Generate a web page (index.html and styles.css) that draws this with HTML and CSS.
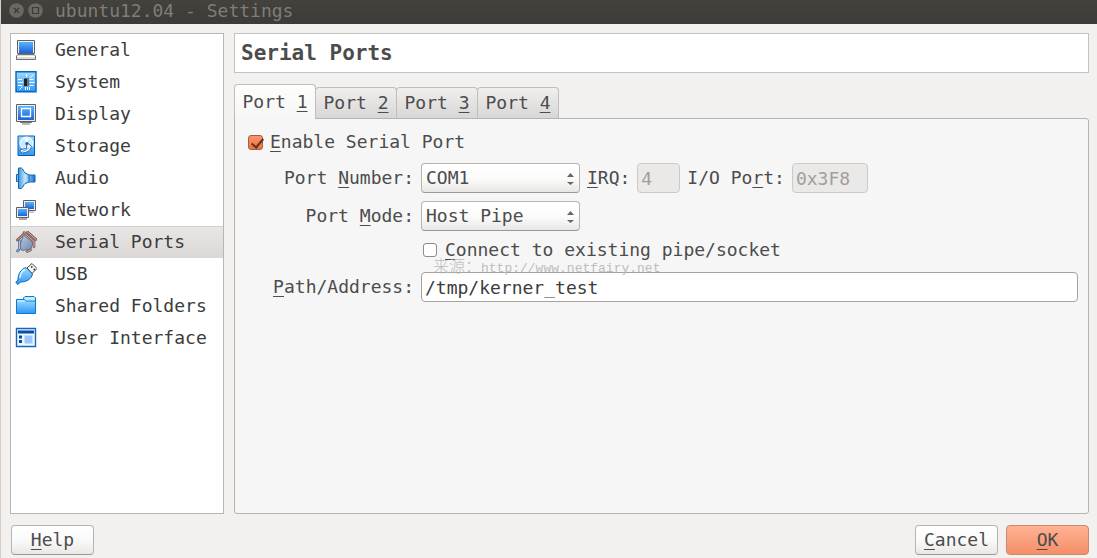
FILE: index.html
```html
<!DOCTYPE html>
<html lang="en">
<head>
<meta charset="utf-8">
<title>ubuntu12.04 - Settings</title>
<link rel="stylesheet" href="styles.css">
</head>
<body>
<svg class="defs" width="0" height="0" aria-hidden="true">
  <defs>
    <linearGradient id="screen" x2="0" y2="1"><stop stop-color="#55b4fb"/><stop offset="1" stop-color="#1c62dc"/></linearGradient>
    <linearGradient id="sky" x2="0" y2="1"><stop stop-color="#9fdcff"/><stop offset="1" stop-color="#2f97f3"/></linearGradient>
    <linearGradient id="cone" x2="1" y2="0"><stop stop-color="#3c94e0"/><stop offset=".4" stop-color="#c4e8ff"/><stop offset="1" stop-color="#1670d0"/></linearGradient>
    <linearGradient id="plug" x2="1" y2="1"><stop stop-color="#c5ccd6"/><stop offset="1" stop-color="#6b87b0"/></linearGradient>
  </defs>
</svg>
<div class="window">
  <header class="titlebar">
    <button class="winbtn" aria-label="Close"><svg width="15" height="15" viewBox="0 0 15 15"><circle cx="7.5" cy="7.500" r="7.300" fill="#6b6961"/><path d="M5 5l5 5M10 5l-5 5" stroke="#3c3b37" stroke-width="1.300"/></svg></button>
    <button class="winbtn" aria-label="Maximize"><svg width="15" height="15" viewBox="0 0 15 15"><circle cx="7.500" cy="7.500" r="7.300" fill="#6b6961"/><path d="M4.500 4.500h6v6h-6z" fill="none" stroke="#3c3b37" stroke-width="1.200"/></svg></button>
    <h1 class="wintitle">ubuntu12.04 - Settings</h1>
  </header>
  <main class="content">
    <nav class="sidebar">
      <a class="item" href="#"><svg class="icon" viewBox="0 0 22 22"><path d="M2.500 1.500h17v13h-17z" fill="#eee" stroke="#606060"/><path d="M4 3h14v11H4z" fill="url(#screen)"/><path d="M3 15.500h16l1.500 1.500v3.500h-19V17z" fill="#ddd" stroke="#707070"/><path d="M2 17.500h18" stroke="#fff"/></svg>General</a>
      <a class="item" href="#"><svg class="icon" viewBox="0 0 22 22"><path d="M1 .8h20v20H1z" fill="url(#sky)" stroke="#0865bb" stroke-width="1.400"/><path d="M3 8.500h4M3 11.500h5M3 14.500h4M14.500 8.500h4M14.500 11.500h5M14.500 14.500h4M11.500 3v3M18 4l-3 3M4.500 18.500l3-3M10.500 16v3M12.500 16v3M14.500 16v3" stroke="#fff"/><path d="M9 7.500h4.500v7.500H9z" fill="#222"/><path d="M12 8h1.500v7H12z" fill="#777"/></svg>System</a>
      <a class="item" href="#"><svg class="icon" viewBox="0 0 22 22"><path d="M1.500 1.500h19v17h-19z" fill="#eee" stroke="#606060"/><path d="M3 3h16v14H3z" fill="url(#screen)"/><path d="M6.500 5.500h9v8h-9z" fill="none" stroke="#fff" stroke-width="1.300"/><path d="M5 19.500h12M7 21h8" stroke="#777"/></svg>Display</a>
      <a class="item" href="#"><svg class="icon" viewBox="0 0 22 22"><path d="M3 1h16.500v19.500H3z" fill="url(#sky)" stroke="#0a5baf"/><circle cx="11.500" cy="8.500" r="6.500" fill="#c8ebff" stroke="#fff"/><path d="M11.500 8.500L9 2.500l5 0zM11.500 8.500l3 6-5 0z" fill="#fff"/><path d="M12 7.500l4.500 4c-1 4-4 6-9 6.500L5 16.500l.5-2 6-1z" fill="#f2fbff" stroke="#2465a5"/><path d="M7 16.500l5-2 2-2" fill="none" stroke="#69ace2"/><circle cx="11.800" cy="8.500" r="1.500" fill="#1667b1"/></svg>Storage</a>
      <a class="item" href="#"><svg class="icon" viewBox="0 0 22 22"><path d="M1.500 7.500h4v7h-4z" fill="#7cbdf0" stroke="#1264b5"/><path d="M3.500 1h3c1.500 1 2 3 3.500 5l4 2h6v7h-6l-4 1.500c-1.500 1.500-2 4-3.500 5h-3z" fill="url(#cone)" stroke="#1264b5"/><path d="M14 8v6.500" stroke="#1264b5"/></svg>Audio</a>
      <a class="item" href="#"><svg class="icon" viewBox="0 0 22 22"><path d="M8.500 1.500h12v10h-12z" fill="#eee" stroke="#606060"/><path d="M10 3h9v7h-9z" fill="url(#screen)"/><path d="M14 13h5" stroke="#999"/><path d="M1.500 8.500h12v10h-12z" fill="#eee" stroke="#606060"/><path d="M3 10h9v7H3z" fill="url(#screen)"/><path d="M4 20h8" stroke="#888" stroke-width="1.500"/></svg>Network</a>
      <a class="item selected" href="#" aria-current="page"><svg class="icon" viewBox="0 0 22 22"><path d="M9 3L2.500 9" stroke="#795d5a" stroke-width="3" stroke-linecap="round"/><path d="M9 3L2.500 9" stroke="#d6a292" stroke-linecap="round"/><path d="M8.500 4l9.500 8-2 6-9 1.500-2.500-4z" fill="url(#plug)" stroke="#5c77a3"/><path d="M9 1.500l10 9M12.500 1l8.500 7.500M19 11v5M12 20.500l3.500-1.500" fill="none" stroke="#795d5a" stroke-width="2.600" stroke-linecap="round"/><path d="M9 1.500l10 9M12.500 1l8.500 7.500M19 11v5M12 20.500l3.500-1.500" fill="none" stroke="#e0b0a0" stroke-linecap="round"/><path d="M4.500 10v8l-2 2" fill="none" stroke="#4f6c9c" stroke-width="2.600" stroke-linecap="round"/><path d="M4.500 10v8l-2 2" fill="none" stroke="#b5c7dd" stroke-linecap="round"/></svg>Serial Ports</a>
      <a class="item" href="#"><svg class="icon" viewBox="0 0 22 22"><path d="M12 5l5-4.500 5 5-5 5z" fill="#f5f5f5" stroke="#444"/><path d="M16 4h1.500M18.500 6.500H20" stroke="#222" stroke-width="1.500"/><path d="M11 4.500l6.500 6.500c-1 5-6 8-12 8L3 21.500.8 19.500 3 17c0-6 3-11 8-12.500z" fill="url(#sky)" stroke="#0865b5"/><path d="M5 15c0-4 2-7 5-8.500" fill="none" stroke="#d9f3ff" stroke-width="1.500"/></svg>USB</a>
      <a class="item" href="#"><svg class="icon" viewBox="0 0 22 22"><path d="M8.500 5V3l1.500-1.500h9L20.500 3v3" fill="#c4ecff" stroke="#087bcc"/><path d="M1.500 4.500h8l2 1.500h9v12.500h-19z" fill="url(#sky)" stroke="#087bcc"/><path d="M2.500 6h7" stroke="#d8f4ff"/></svg>Shared Folders</a>
      <a class="item" href="#"><svg class="icon" viewBox="0 0 22 22"><path d="M1.500 1.500h19v18h-19z" fill="#eef7ff" stroke="#1168ba" stroke-width="1.400"/><path d="M3 3.500h16v3H3z" fill="#0a4ba0"/><path d="M4 8.500h3v3H4zM4 13h3v3H4z" fill="#0a4ba0"/><path d="M9.500 8.500h8v8h-8z" fill="#9ac5ff"/></svg>User Interface</a>
    </nav>
    <section class="page">
      <h2 class="heading">Serial Ports</h2>
      <div class="tabs" role="tablist">
        <button class="tab active" role="tab" aria-selected="true">Port <u>1</u></button>
        <button class="tab" role="tab">Port <u>2</u></button>
        <button class="tab" role="tab">Port <u>3</u></button>
        <button class="tab" role="tab">Port <u>4</u></button>
      </div>
      <form class="panel" id="settings">
        <label class="check enable"><input type="checkbox" checked><span><u>E</u>nable Serial Port</span></label>
        <div class="fields">
          <label class="caption" for="number">Port <u>N</u>umber:</label>
          <div class="row">
            <span class="combo"><select id="number"><option>COM1</option></select><svg class="arrows" viewBox="0 0 7 12" aria-hidden="true"><path d="M3.500 0L7 4H0zM3.500 12L7 9H0z" fill="#666"/></svg></span>
            <label for="irq"><u>I</u>RQ:</label>
            <input class="box irq" id="irq" type="text" value="4" disabled>
            <label for="io">I/O Po<u>r</u>t:</label>
            <input class="box io" id="io" type="text" value="0x3F8" disabled>
          </div>
          <label class="caption" for="mode">Port <u>M</u>ode:</label>
          <div class="row">
            <span class="combo"><select id="mode"><option>Host Pipe</option></select><svg class="arrows" viewBox="0 0 7 12" aria-hidden="true"><path d="M3.500 0L7 4H0zM3.500 12L7 9H0z" fill="#666"/></svg></span>
          </div>
          <div class="row connect">
            <label class="check"><input type="checkbox"><span><u>C</u>onnect to existing pipe/socket</span></label>
            <span class="source"><span class="han">来源：</span>http://www.netfairy.net</span>
          </div>
          <label class="caption" for="path"><u>P</u>ath/Address:</label>
          <input class="box path" id="path" type="text" value="/tmp/kerner_test">
        </div>
      </form>
    </section>
  </main>
  <footer class="footer">
    <button class="btn help"><u>H</u>elp</button>
    <button class="btn"><u>C</u>ancel</button>
    <button class="btn primary"><u>O</u>K</button>
  </footer>
</div>
</body>
</html>
```
FILE: styles.css
```css
* { box-sizing: border-box; }
body {
  margin: 0;
  background: #d8ccc4;
  color: #4c4c4c;
  font: 18px/22px "DejaVu Sans Mono", monospace;
}
button, input, select { font: inherit; color: inherit; margin: 0; }
u { text-decoration-thickness: 1px; text-underline-offset: 3px; text-decoration-skip-ink: none; }
.defs { position: absolute; }
.window {
  display: flex;
  flex-direction: column;
  min-height: 100vh;
  margin-left: 1px;
  background: #f2f1f0;
}
.titlebar {
  display: flex;
  align-items: flex-start;
  gap: 4px;
  height: 24px;
  padding-left: 8px;
  background: linear-gradient(#43423d, #3c3b37);
}
.winbtn { display: flex; width: 15px; padding: 3px 0; border: 0; background: none; }
.wintitle { margin: 0 0 0 8px; font-size: 18px; font-weight: normal; color: #807d78; }
.content {
  flex: 1;
  display: grid;
  grid-template-columns: 214px 1fr;
  gap: 10px;
  padding: 9px 8px 0 9px;
}
.sidebar { border: 1px solid #b9b7b3; background: #fff; }
.item {
  display: flex;
  align-items: center;
  gap: 18px;
  height: 32px;
  padding-left: 4px;
  color: #3c3c3c;
  text-decoration: none;
}
.item.selected { background: linear-gradient(#e9e7e6, #dad7d5); box-shadow: inset 0 1px #d3d0cd; }
.icon { width: 22px; height: 22px; }
.page { display: flex; flex-direction: column; }
.heading {
  margin: 0 0 11px;
  padding: 8px 6px;
  border: 1px solid #c4c2be;
  background: #fff;
  font-size: 21px;
  line-height: 22px;
}
.tabs { display: flex; align-items: flex-end; height: 34px; }
.tab {
  width: 82px;
  height: 31px;
  margin-right: -1px;
  padding: 0;
  border: 1px solid #c0beba;
  border-bottom: 0;
  border-radius: 4px 4px 0 0;
  background: linear-gradient(#f0efee, #d9d7d5);
}
.tab.active {
  z-index: 1;
  height: 35px;
  margin-bottom: -1px;
  background: linear-gradient(#fdfdfc, #f6f6f5);
}
.panel {
  flex: 1;
  padding: 12px 10px 12px 13px;
  border: 1px solid #b5b3af;
  border-radius: 0 3px 3px 3px;
  background: #f6f6f6;
}
.check { display: flex; align-items: center; gap: 8px; }
.check input {
  appearance: none;
  width: 14px;
  height: 14px;
  border: 1px solid #8e8b87;
  border-radius: 3px;
  background: #fff;
}
.check input:checked {
  width: 15px;
  height: 15px;
  border-color: #a85c40;
  background: linear-gradient(#f99571, #f0703c);
  position: relative;
}
.check input:checked::after {
  content: "";
  position: absolute;
  left: 5px;
  top: 0;
  width: 5px;
  height: 10px;
  border: solid #59331f;
  border-width: 0 2px 2px 0;
  transform: rotate(40deg);
}
.enable { gap: 7px; }
.fields {
  display: grid;
  grid-template-columns: 144px 1fr;
  gap: 8px 7px;
  align-items: center;
  margin: 10px 0 0 22px;
}
.caption { text-align: right; }
.row { display: flex; align-items: center; gap: 7px; }
.connect { grid-column: 2; position: relative; height: 25px; padding: 0 0 3px 2px; }
.source {
  position: absolute;
  left: 12px;
  top: 18px;
  color: #bdbdbd;
  font: 13px/16px "Liberation Mono", "Noto Sans CJK SC", monospace;
  white-space: nowrap;
  pointer-events: none;
}
.han { font-family: "Noto Sans CJK SC", sans-serif; font-size: 16px; font-weight: 300; }
.combo { position: relative; display: flex; width: 159px; }
.combo select {
  appearance: none;
  width: 100%;
  height: 30px;
  padding: 0 20px 0 4px;
  border: 1px solid #b6b4b1;
  border-bottom-color: #9b9995;
  border-radius: 4px;
  background: linear-gradient(#fff, #fcfcfc 50%, #e9e7e5);
}
.arrows { position: absolute; right: 6px; top: 10px; width: 7px; height: 12px; pointer-events: none; }
.box {
  height: 30px;
  padding: 0 3px;
  border: 1px solid #a5a29e;
  border-radius: 4px;
  background: #fff;
}
.box:disabled { border-color: #cdc9c6; background: #ebe9e7; color: #a09f9d; }
.irq { width: 43px; }
.io { width: 76px; }
.path { width: 100%; color: #3c3c3c; }
.footer { display: flex; gap: 8px; padding: 11px 8px 3px 10px; }
.btn {
  width: 83px;
  height: 30px;
  padding: 0;
  border: 1px solid #b6b4b1;
  border-bottom-color: #9b9995;
  border-radius: 4px;
  background: linear-gradient(#fff, #fafafa 50%, #eae8e6);
}
.help { margin-right: auto; }
.primary { border-color: #c58c74; background: linear-gradient(#ffb293, #f58e68); }
```
